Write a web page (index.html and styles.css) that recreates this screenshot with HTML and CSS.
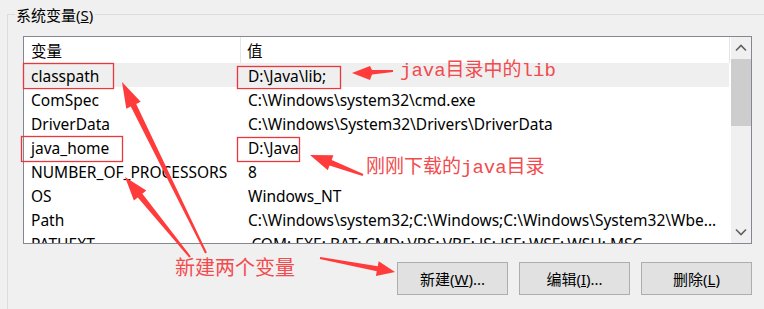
FILE: index.html
```html
<!DOCTYPE html>
<html lang="zh-CN">
<head>
    <meta charset="UTF-8">
    <title>系统变量</title>
    <link rel="stylesheet" href="styles.css">
</head>
<body>

<div class="group">
    <div class="group-title">系统变量(<u>S</u>)</div>

    <div class="listbox">
        <div class="list-main">
            <div class="list-head">
                <div class="cell-name">变量</div>
                <div class="cell-value">值</div>
            </div>
            <div class="row selected">
                <div class="cell-name">classpath</div>
                <div class="cell-value">D:\Java\lib;</div>
            </div>
            <div class="row">
                <div class="cell-name">ComSpec</div>
                <div class="cell-value">C:\Windows\system32\cmd.exe</div>
            </div>
            <div class="row">
                <div class="cell-name">DriverData</div>
                <div class="cell-value">C:\Windows\System32\Drivers\DriverData</div>
            </div>
            <div class="row">
                <div class="cell-name">java_home</div>
                <div class="cell-value">D:\Java</div>
            </div>
            <div class="row">
                <div class="cell-name">NUMBER_OF_PROCESSORS</div>
                <div class="cell-value">8</div>
            </div>
            <div class="row">
                <div class="cell-name">OS</div>
                <div class="cell-value">Windows_NT</div>
            </div>
            <div class="row">
                <div class="cell-name">Path</div>
                <div class="cell-value">C:\Windows\system32;C:\Windows;C:\Windows\System32\Wbe...</div>
            </div>
            <div class="row">
                <div class="cell-name">PATHEXT</div>
                <div class="cell-value">.COM;.EXE;.BAT;.CMD;.VBS;.VBE;.JS;.JSE;.WSF;.WSH;.MSC</div>
            </div>
        </div>

        <div class="vscroll">
            <div class="scroll-btn">
                <svg width="12" height="8" viewBox="0 0 12 8"><polyline points="1,6.5 6,1.5 11,6.5" fill="none" stroke="#606060" stroke-width="1.6"/></svg>
            </div>
            <div class="scroll-thumb"></div>
            <div class="scroll-track"></div>
            <div class="scroll-btn">
                <svg width="12" height="8" viewBox="0 0 12 8"><polyline points="1,1.5 6,6.5 11,1.5" fill="none" stroke="#606060" stroke-width="1.6"/></svg>
            </div>
        </div>
    </div>

    <div class="button-row">
        <button>新建(<u>W</u>)...</button>
        <button>编辑(<u>I</u>)...</button>
        <button>删除(<u>L</u>)</button>
    </div>
</div>

<!-- red annotations drawn over the dialog -->
<svg class="marks" width="764" height="309" viewBox="0 0 764 309">
    <g fill="none" stroke="#e8383d" stroke-width="1.3">
        <rect x="23.5" y="63.5" width="90" height="25"/>
        <rect x="237.5" y="66.5" width="103" height="22"/>
        <rect x="21.5" y="136.5" width="101" height="25"/>
        <rect x="237.5" y="137.5" width="62" height="24"/>
    </g>
    <g fill="#ff3b3b">
        <polygon points="393,72 372,74.5 370,80 352,73 370,66 372,70 393,70"/>
        <polygon points="363.4,174.1 331.7,160 333.4,155.3 310,155 327.8,170.3 329.5,165.6 362.6,175.9"/>
        <polygon points="319.8,259 376.8,271.2 375.9,276.1 395,272 378.7,261.3 377.8,266.2 320.2,257"/>
        <polygon points="206.9,252.6 136.2,104 140.7,101.8 122,82 126.3,108.8 130.8,106.6 205.1,253.4"/>
        <polygon points="190.8,256.4 142.4,193.7 146.3,190.6 125,177 133.9,200.6 137.8,197.5 189.2,257.6"/>
    </g>
</svg>
<div class="note note-lib">java目录中的lib</div>
<div class="note note-home">刚刚下载的java目录</div>
<div class="note note-new">新建两个变量</div>

</body>
</html>
```

FILE: styles.css
```css
/* Windows environment variables dialog, lower part */
body {
    margin: 0;
    width: 764px;
    height: 309px;
    overflow: hidden;
    position: relative;
    background-color: #f0f0f0;
    font-family: "Noto Sans", "Noto Sans CJK SC", sans-serif;
    font-size: 15.5px;
    color: #000;
}

.group {
    margin: 14px 0 0 7px;
    height: 300px;
    border-top: 1px solid #dcdcdc;
    border-left: 1px solid #dcdcdc;
}

.group-title {
    width: fit-content;
    margin: -9px 0 0 7px;
    padding: 0 2px 0 1px;
    font-size: 15px;
    line-height: 18px;
    background-color: #f0f0f0;
}

.listbox {
    display: flex;
    width: 727px;
    height: 206px;
    margin: 12px 0 0 15px;
    border: 1px solid #828790;
    background-color: #fff;
    overflow: hidden;
}

.list-main {
    width: 706px;
}

.list-head, .row {
    display: grid;
    grid-template-columns: 217px 1fr;
    white-space: nowrap;
    overflow: hidden;
}

.list-head {
    height: 26px;
    line-height: 28px;
    width: 705px;
    border-right: 1px solid #e5e5e5;
}

.list-head .cell-name {
    border-right: 1px solid #e5e5e5;
}

.list-head .cell-value {
    padding-left: 6px;
}

.row {
    height: 24px;
    line-height: 26px;
    width: 705px;
}

.row.selected {
    background-color: #efefef;
}

.cell-name {
    padding-left: 7px;
}

.cell-value {
    padding-left: 7px;
    overflow: hidden;
}

.vscroll {
    width: 20px;
    margin-left: 1px;
    display: flex;
    flex-direction: column;
    background-color: #f0f0f0;
}

.scroll-btn {
    height: 22px;
    display: flex;
    align-items: center;
    justify-content: center;
}

.scroll-thumb {
    height: 67px;
    background-color: #cdcdcd;
}

.scroll-track {
    flex: 1;
}

.button-row {
    display: flex;
    justify-content: flex-end;
    gap: 11px;
    width: 729px;
    margin: 18px 0 0 15px;
}

button {
    width: 111px;
    height: 33px;
    padding: 0;
    font-family: "Noto Sans", "Noto Sans CJK SC", sans-serif;
    font-size: 15px;
    color: #000;
    background-color: #e1e1e1;
    border: 1px solid #adadad;
    border-radius: 0;
}

.marks {
    position: absolute;
    left: 0;
    top: 0;
}

.note {
    position: absolute;
    font-family: "Liberation Mono", "Noto Sans CJK SC", monospace;
    font-size: 19px;
    line-height: 22px;
    color: #f24b4e;
    white-space: nowrap;
}

.note-lib {
    left: 400px;
    top: 60px;
}

.note-home {
    left: 366px;
    top: 157px;
}

.note-new {
    left: 175px;
    top: 259px;
    font-size: 20px;
}
```
